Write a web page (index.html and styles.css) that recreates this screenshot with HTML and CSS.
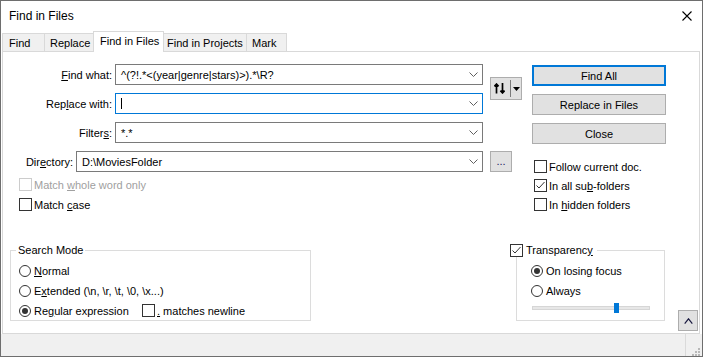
FILE: index.html
```html
<!DOCTYPE html>
<html>
<head>
<meta charset="utf-8">
<title>Find in Files</title>
<link rel="stylesheet" href="styles.css">
</head>
<body>
<div class="window">
  <div class="titlebar">
    <span class="title">Find in Files</span>
    <svg class="close" width="10" height="10" viewBox="0 0 10 10"><path d="M0.5 0.5L9.5 9.5M9.5 0.5L0.5 9.5" stroke="#000" stroke-width="1.1" fill="none"/></svg>
  </div>
  <div class="tabs">
    <div class="tab t-find">Find</div>
    <div class="tab t-replace">Replace</div>
    <div class="tab t-files active">Find in Files</div>
    <div class="tab t-projects">Find in Projects</div>
    <div class="tab t-mark">Mark</div>
  </div>
  <div class="panel">
    <div class="top">
      <div class="col-left">
        <div class="fields">
          <div class="field">
            <span class="lbl"><u>F</u>ind what:</span>
            <div class="combo"><span class="val">^(?!.*&lt;(year|genre|stars)&gt;).*\R?</span><svg class="chev" width="9" height="5" viewBox="0 0 9 5"><path d="M0.5 0.5L4.5 4.5L8.5 0.5" stroke="#606060" fill="none"/></svg></div>
          </div>
          <div class="field">
            <span class="lbl">Rep<u>l</u>ace with:</span>
            <div class="combo focus"><span class="caret"></span><svg class="chev" width="9" height="5" viewBox="0 0 9 5"><path d="M0.5 0.5L4.5 4.5L8.5 0.5" stroke="#606060" fill="none"/></svg></div>
          </div>
          <div class="field">
            <span class="lbl">Filter<u>s</u>:</span>
            <div class="combo"><span class="val">*.*</span><svg class="chev" width="9" height="5" viewBox="0 0 9 5"><path d="M0.5 0.5L4.5 4.5L8.5 0.5" stroke="#606060" fill="none"/></svg></div>
          </div>
          <div class="field">
            <span class="lbl">Dir<u>e</u>ctory:</span>
            <div class="combo wide"><span class="val">D:\MoviesFolder</span><svg class="chev" width="9" height="5" viewBox="0 0 9 5"><path d="M0.5 0.5L4.5 4.5L8.5 0.5" stroke="#606060" fill="none"/></svg></div>
          </div>
        </div>
        <div class="checks checks-left">
          <div class="check disabled"><span class="box"></span><span>Match <u>w</u>hole word only</span></div>
          <div class="check"><span class="box"></span><span>Match <u>c</u>ase</span></div>
        </div>
      </div>
      <div class="col-mid">
        <div class="btn swap">
          <svg width="11" height="11" viewBox="0 0 11 11"><path d="M2.5 10.5V1.2M0.4 3.4L2.5 1.1L4.6 3.4M8.5 0V9.8M6.4 7.6L8.5 9.9L10.6 7.6" stroke="#000" stroke-width="1.7" fill="none"/></svg>
          <span class="swap-sep"></span>
          <svg width="7" height="4" viewBox="0 0 7 4"><path d="M0 0H7L3.5 4Z" fill="#000"/></svg>
        </div>
        <div class="btn dots">...</div>
      </div>
      <div class="col-right">
        <div class="buttons">
          <div class="btn big default">Find All</div>
          <div class="btn big">Replace in Files</div>
          <div class="btn big">Close</div>
        </div>
        <div class="checks checks-right">
          <div class="check"><span class="box"></span><span>Follow current doc.</span></div>
          <div class="check"><span class="box"><svg width="11" height="11" viewBox="0 0 11 11"><path d="M1.5 5.5L4 8L9.5 2" stroke="#333" stroke-width="1" fill="none"/></svg></span><span>In all su<u>b</u>-folders</span></div>
          <div class="check"><span class="box"></span><span>In <u>h</u>idden folders</span></div>
        </div>
      </div>
    </div>
    <div class="bottom">
      <fieldset class="group search">
        <legend>Search Mode</legend>
        <div class="opt r1"><span class="radio"></span><span><u>N</u>ormal</span></div>
        <div class="opt r2"><span class="radio"></span><span>E<u>x</u>tended (\n, \r, \t, \0, \x...)</span></div>
        <div class="opt r3"><span class="radio on"><span class="dot"></span></span><span class="rx">Re<u>g</u>ular expression</span><span class="box"></span><span class="nl"><u>.</u> matches newline</span></div>
      </fieldset>
      <fieldset class="group transp">
        <legend><span class="box"><svg width="11" height="11" viewBox="0 0 11 11"><path d="M1.5 5.5L4 8L9.5 2" stroke="#333" stroke-width="1" fill="none"/></svg></span><span>Transparenc<u>y</u></span></legend>
        <div class="opt r1"><span class="radio on"><span class="dot"></span></span><span>On losing focus</span></div>
        <div class="opt r2"><span class="radio"></span><span>Always</span></div>
        <div class="opt r3 slider-row"><div class="track"><span class="thumb"></span></div></div>
      </fieldset>
      <div class="btn collapse"><svg width="9" height="6" viewBox="0 0 9 6"><path d="M0.7 5.6L4.5 0.8L8.3 5.6" stroke="#1a1a40" stroke-width="1.2" fill="none"/></svg></div>
    </div>
  </div>
  <div class="statusbar">
    <div class="sb-main"></div>
    <div class="sb-grip">
      <svg width="8" height="8" viewBox="0 0 8 8"><g fill="#b8b8b8"><rect x="6" y="0" width="2" height="2"/><rect x="3" y="3" width="2" height="2"/><rect x="6" y="3" width="2" height="2"/><rect x="0" y="6" width="2" height="2"/><rect x="3" y="6" width="2" height="2"/><rect x="6" y="6" width="2" height="2"/></g></svg>
    </div>
  </div>
</div>
</body>
</html>
```
FILE: styles.css
```css
* { box-sizing: border-box; }
html, body { margin: 0; padding: 0; background: #fff; }
body {
  font-family: "Liberation Sans", Arial, sans-serif;
  font-size: 11px;
  color: #000;
}
u { text-decoration: underline; text-underline-offset: 1px; }

.window {
  width: 703px;
  height: 357px;
  border: 1px solid #6e6e6e;
  background: #fff;
  display: flex;
  flex-direction: column;
}

.titlebar {
  height: 30px;
  flex: none;
  display: flex;
  align-items: center;
  justify-content: space-between;
  padding: 0 10px 0 8px;
}
.title { font-size: 12px; }
.close { display: block; margin-top: -1px; }

.tabs {
  height: 20px;
  flex: none;
  display: flex;
  align-items: flex-end;
  margin-left: 1px;
  position: relative;
  z-index: 1;
}
.tab {
  height: 18px;
  border: 1px solid #d9d9d9;
  border-bottom: none;
  background: #f0f0f0;
  margin-right: -1px;
  display: flex;
  align-items: center;
  padding-left: 6px;
  white-space: nowrap;
}
.t-find { width: 43px; }
.t-replace { width: 50px; padding-left: 5px; }
.t-files { width: 71px; }
.t-projects { width: 84px; padding-left: 3px; }
.t-mark { width: 41px; padding-left: 5px; }
.tab.active {
  height: 21px;
  margin-bottom: -1px;
  background: #fff;
  padding-bottom: 3px;
}

.panel {
  height: 283px;
  flex: none;
  margin: 0 2px 0 1px;
  border: 1px solid #d9d9d9;
  background: #fff;
}

.top { display: flex; align-items: flex-start; }
.col-left { width: 480px; padding-top: 12px; }
.fields { display: flex; flex-direction: column; gap: 8px; }
.field {
  height: 21px;
  display: flex;
  justify-content: flex-end;
  align-items: center;
  gap: 3px;
}
.lbl { white-space: nowrap; }
.combo {
  width: 368px;
  height: 21px;
  border: 1px solid #7a7a7a;
  background: #fff;
  display: flex;
  align-items: center;
  justify-content: space-between;
  padding: 0 4px 0 5px;
}
.combo.wide { width: 407px; }
.combo.focus { border-color: #0078d7; }
.val { white-space: nowrap; }
.caret { width: 1px; height: 11px; background: #000; margin-left: 0; }
.chev { display: block; flex: none; }

.checks { display: flex; flex-direction: column; }
.checks-left { margin-top: 6px; padding-left: 16px; gap: 7px; }
.checks-right { margin-top: 16px; padding-left: 2px; gap: 6px; }
.check {
  height: 13px;
  display: flex;
  align-items: center;
  gap: 2px;
  white-space: nowrap;
}
.box {
  width: 13px;
  height: 13px;
  flex: none;
  border: 1px solid #333;
  background: #fff;
  display: flex;
  align-items: center;
  justify-content: center;
}
.box svg { display: block; }
.check.disabled { color: #a0a0a0; }
.check.disabled .box { border-color: #cccccc; }

.col-mid {
  margin-left: 7px;
  display: flex;
  flex-direction: column;
  align-items: flex-start;
}
.btn {
  background: #e1e1e1;
  border: 1px solid #adadad;
  display: flex;
  align-items: center;
  justify-content: center;
  white-space: nowrap;
}
.swap {
  margin-top: 25px;
  width: 32px;
  height: 23px;
  justify-content: flex-start;
  padding-left: 3px;
  gap: 0;
}
.swap svg { display: block; }
.swap-sep {
  width: 1px;
  height: 17px;
  background: #7a7a7a;
  margin: 0 2px 0 5px;
}
.dots {
  margin-top: 51px;
  width: 22px;
  height: 21px;
  align-items: flex-end;
  padding-bottom: 4px;
  color: #202060;
  line-height: 11px;
}

.col-right { margin-left: 10px; width: 134px; }
.buttons { display: flex; flex-direction: column; gap: 8px; padding-top: 13px; }
.big { height: 21px; }
.default {
  border-color: #0078d7;
  box-shadow: inset 0 0 0 1px #0078d7;
}

.bottom {
  display: flex;
  align-items: flex-start;
  margin-top: 32px;
}
.group {
  margin: 0;
  border: 1px solid #dcdcdc;
  padding: 4px 0 0 8px;
  min-width: 0;
}
.group legend {
  height: 14px;
  line-height: 14px;
  padding: 0 2px;
  white-space: nowrap;
}
.search { width: 301px; margin-left: 7px; }
.search legend { margin-left: -3px; }
.transp { width: 149px; margin-left: 205px; padding-left: 14px; }
.transp legend {
  margin-left: -21px;
  padding: 0 4px 0 0;
  display: flex;
  align-items: center;
  gap: 3px;
}
.opt {
  height: 20px;
  display: flex;
  align-items: center;
  gap: 3px;
  white-space: nowrap;
}
.opt.r3 { height: 19px; }
.radio {
  width: 12px;
  height: 12px;
  flex: none;
  border: 1px solid #333;
  border-radius: 50%;
  background: #fff;
  display: flex;
  align-items: center;
  justify-content: center;
}
.dot { width: 6px; height: 6px; border-radius: 50%; background: #333; }
.rx { width: 105px; }
.nl { margin-left: -1px; }

.slider-row { align-items: flex-start; padding-top: 5px; padding-left: 1px; }
.track {
  position: relative;
  width: 118px;
  height: 4px;
  background: #e7e7e7;
  border: 1px solid #d6d6d6;
}
.thumb {
  position: absolute;
  left: 81px;
  top: -4px;
  width: 5px;
  height: 10px;
  background: #0078d7;
}

.collapse {
  margin-left: 13px;
  margin-top: 67px;
  width: 20px;
  height: 21px;
}
.collapse svg { display: block; }

.statusbar {
  flex: 1;
  background: #f0f0f0;
  display: flex;
}
.sb-main { flex: 1; border-right: 1px solid #dadada; }
.sb-grip {
  width: 16px;
  display: flex;
  align-items: flex-end;
  justify-content: flex-end;
  padding: 0 2px 0 0;
}
.sb-grip svg { display: block; }
```
